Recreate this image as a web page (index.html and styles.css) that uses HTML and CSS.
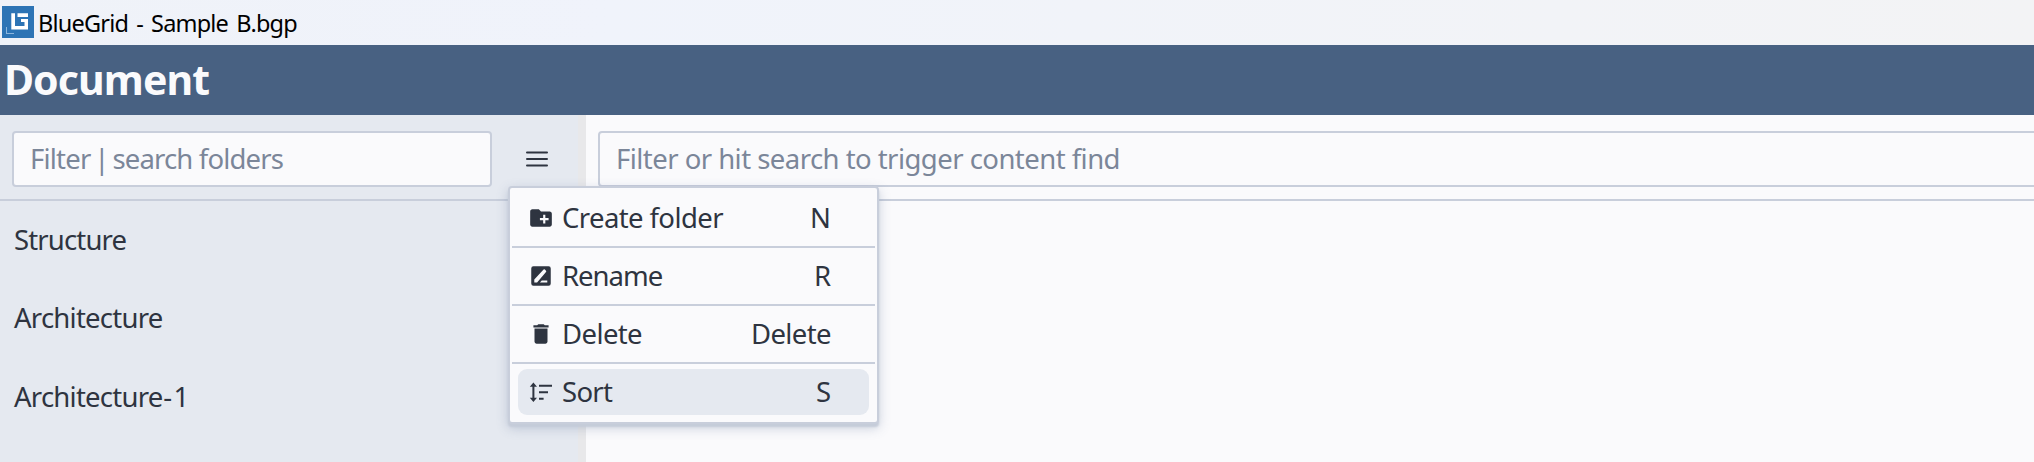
FILE: index.html
```html
<!DOCTYPE html>
<html lang="en">
<head>
<meta charset="utf-8">
<title>BlueGrid - Sample B.bgp</title>
<link rel="stylesheet" href="styles.css">
</head>
<body>
<div class="titlebar">
  <svg class="logo" viewBox="0 0 32 32"><path fill="#2d74b5" d="M0 0h32v32H0z"/><path fill="#fff" d="M9.3 7.3H13V20h9.5v-4H19v-3h7v10.6H9.3zM15.5 7.3H26V11H15.5z"/><path fill="#8db6dd" d="M4 21h1v6h7v1H4z"/></svg>
  <span class="app-name">BlueGrid - Sample B.bgp</span>
</div>
<header class="header">Document</header>
<div class="workspace">
  <aside class="sidebar">
    <div class="toolbar">
      <div class="field field-folders"><span>Filter</span><span class="bar">|</span><span class="folders-hint">search folders</span></div>
      <div class="menu-anchor">
        <svg class="hamburger" viewBox="0 0 22 16"><path d="M1 1.6h20M1 8.1h20M1 14.600h20"/></svg>
        <div class="menu">
          <div class="item create">
            <svg class="icon" viewBox="0 0 24 24"><path d="M20 6h-8l-2-2H4c-1.11 0-1.99.89-1.99 2L2 18c0 1.11.89 2 2 2h16c1.11 0 2-.89 2-2V8c0-1.11-.89-2-2-2zm-1 8h-3v3h-2v-3h-3v-2h3V9h2v3h3v2z"/></svg>
            <span class="label">Create folder</span><span class="key">N</span>
          </div>
          <div class="separator"></div>
          <div class="item rename">
            <svg class="icon" viewBox="0 0 24 24"><path fill-rule="evenodd" d="M5 3h14a2 2 0 0 1 2 2v14a2 2 0 0 1-2 2H5a2 2 0 0 1-2-2V5a2 2 0 0 1 2-2zM5.800 17.900V15.300L14.400 6.100q.6-.6 1.200 0l1 1q.6.6 0 1.200L8.400 17.900zM11 17.900h6.800v-1.800h-5.100z"/></svg>
            <span class="label">Rename</span><span class="key">R</span>
          </div>
          <div class="separator"></div>
          <div class="item delete">
            <svg class="icon" viewBox="0 0 24 24"><path d="M6 19c0 1.100.9 2 2 2h8c1.100 0 2-.9 2-2V7H6v12zM19 4h-3.500l-1-1h-5l-1 1H5v2h14V4z"/></svg>
            <span class="label">Delete</span><span class="key">Delete</span>
          </div>
          <div class="separator"></div>
          <div class="item sort active">
            <svg class="icon" viewBox="0 0 26 26"><path d="M5.400 3.600L1.800 7.800h2.600v10.900H1.800l3.600 4.200 3.600-4.200H6.400V7.800H9zM11 5.700h13v2H11zM11 12.200h9v2h-9zM11 18.700h4.600v2H11z"/></svg>
            <span class="label">Sort</span><span class="key">S</span>
          </div>
        </div>
      </div>
    </div>
    <div class="folder first">Structure</div>
    <div class="folder">Architecture</div>
    <div class="folder">Architecture<span class="suffix">-1</span></div>
  </aside>
  <div class="splitter"></div>
  <main class="content">
    <div class="toolbar">
      <div class="field field-content">Filter or hit search to trigger content find</div>
    </div>
  </main>
</div>
</body>
</html>
```

FILE: styles.css
```css
* { box-sizing: border-box; }
body {
  margin: 0;
  height: 462px;
  overflow: hidden;
  display: flex;
  flex-direction: column;
  background: #fafafc;
  color: #2e3440;
  font: 27.5px "Noto Sans", "Open Sans", sans-serif;
}
.titlebar {
  height: 45px;
  flex: none;
  display: flex;
  align-items: center;
  padding-left: 2px;
  gap: 4px;
  background: linear-gradient(90deg, #eff2f8, #f0f3fb 30%, #f3f3f5 100%);
  color: #000;
}
.logo { width: 32px; height: 32px; margin-bottom: 1px; }
.app-name { font-size: 23.5px; letter-spacing: -0.8px; word-spacing: 2.8px; line-height: 43px; padding-top: 2px; }
.header {
  height: 70px;
  flex: none;
  padding: 0 0 0 4px;
  background: #486182;
  color: #fafafc;
  font-size: 41px;
  font-weight: 700;
  letter-spacing: -0.9px;
  line-height: 69px;
}
.workspace { flex: 1; display: flex; }
.sidebar { width: 578px; background: #e5e9f0; }
.splitter { width: 8px; background: #e8e8ea; }
.content { flex: 1; overflow: hidden; }
.toolbar {
  height: 86px;
  display: flex;
  align-items: flex-start;
  padding: 16px 0 0 12px;
  border-bottom: 2px solid #c8cedb;
}
.field {
  height: 56px;
  border: 2px solid #c8cedb;
  border-radius: 4px;
  background: #fafafc;
  color: #7b8699;
  line-height: 51px;
  white-space: nowrap;
}
.field-folders { width: 480px; padding-left: 16px; display: flex; letter-spacing: -0.8px; }
.bar { width: 22px; display: flex; justify-content: center; }
.folders-hint { letter-spacing: -0.85px; }
.field-content {
  width: 1500px;
  flex: none;
  padding-left: 16px;
  letter-spacing: -0.54px;
}
.menu-anchor {
  position: relative;
  width: 86px;
  height: 56px;
  padding-left: 34px;
  display: flex;
  align-items: center;
}
.hamburger { width: 22px; height: 16px; fill: none; stroke: #2e3440; stroke-width: 2; stroke-linecap: round; }
.menu {
  position: absolute;
  z-index: 2;
  top: 55px;
  left: 16px;
  width: 371px;
  height: 238px;
  padding: 7px 2px;
  border: 2px solid #c8cedb;
  border-radius: 4px;
  background: #fafafc;
  box-shadow: 0 3px 2px #c5ccd9, 0 4px 12px rgba(76, 96, 140, 0.28);
}
.item {
  height: 46px;
  margin: 0 6px;
  padding: 0 38px 0 10px;
  display: flex;
  align-items: center;
  border-radius: 9px;
  line-height: 45px;
}
.active { background: #e5e9f0; }
.icon { width: 26px; height: 26px; fill: #2e3440; }
.label { margin-left: 8px; flex: 1; height: 46px; }
.key { height: 46px; }
.create .label { letter-spacing: -0.6px; }
.rename .label { letter-spacing: -1px; }
.sort .label { letter-spacing: -0.7px; }
.delete { letter-spacing: -0.6px; }
.separator { height: 2px; margin: 5px 0; background: #c8cedb; }
.folder {
  height: 79px;
  padding: 0 0 3px 14px;
  line-height: 76px;
  letter-spacing: -0.75px;
}
.first { line-height: 78px; letter-spacing: -0.85px; }
.suffix { letter-spacing: 1.6px; margin-left: 0.6px; }
```
